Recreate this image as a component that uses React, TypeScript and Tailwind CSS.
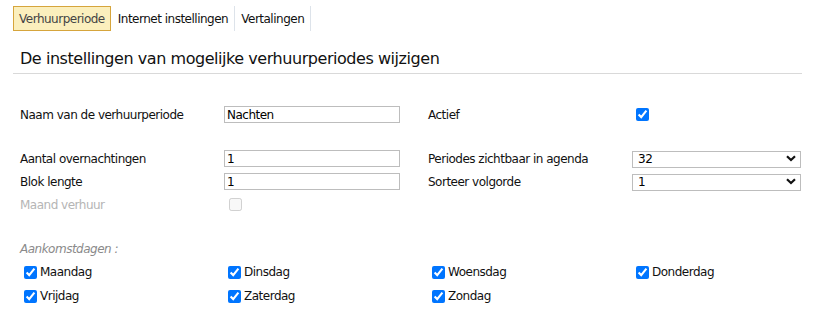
import React from 'react'

const font = { fontFamily: '"DejaVu Sans", Verdana, sans-serif' }

const Chevron = () => (
  <svg
    aria-hidden="true"
    width="10"
    height="7"
    viewBox="0 0 10 7"
    className="absolute right-[5px] top-[5px] pointer-events-none"
  >
    <path d="M1 1.2 L5 5 L9 1.2" fill="none" stroke="#111" strokeWidth="2.2" />
  </svg>
)

const TextField = ({ value }: { value: string }) => (
  <input
    defaultValue={value}
    className="w-[176px] shrink-0 h-[17px] border border-[#bdbdbd] px-[2px] text-[12px] tracking-[-0.5px] text-black outline-none leading-none"
    style={font}
  />
)

const SelectField = ({ value }: { value: string }) => (
  <div className="relative w-[169px] shrink-0 h-[17px]">
    <select
      defaultValue={value}
      className="appearance-none w-full h-full border border-[#bdbdbd] bg-white pl-[5px] text-[12px] tracking-[-0.5px] text-black outline-none leading-none"
      style={font}
    >
      <option>{value}</option>
    </select>
    <Chevron />
  </div>
)

const Check = ({ checked = true, disabled = false }) => (
  <input
    type="checkbox"
    defaultChecked={checked}
    disabled={disabled}
    className="w-[13px] h-[13px] m-0 shrink-0 accent-[#0075ff]"
  />
)

const days = [
  'Maandag',
  'Dinsdag',
  'Woensdag',
  'Donderdag',
  'Vrijdag',
  'Zaterdag',
  'Zondag',
]

export default function App() {
  return (
    <div
      className="w-[815px] h-[323px] bg-white text-[12px] tracking-[-0.5px] text-[#111] overflow-hidden"
      style={font}
    >
      {/* tabs */}
      <div className="flex items-center pt-[6px] pl-[13px] h-[31px]">
        <div className="h-[25px] px-[5px] flex items-center bg-[#fbefbd] border border-[#d6a53c] text-[#444]">
          Verhuurperiode
        </div>
        <div className="h-[25px] flex items-center pl-[7px] pr-[6px] border-r border-[#dde3ea]">
          Internet instellingen
        </div>
        <div className="h-[25px] flex items-center px-[6px] border-r border-[#dde3ea]">
          Vertalingen
        </div>
      </div>

      {/* title */}
      <div className="mx-[13px] mt-[16px] border-b border-[#d9d9d9] pl-[7px] pb-[2px] text-[16px] tracking-[-0.45px] text-[#111]">
        De instellingen van mogelijke verhuurperiodes wijzigen
      </div>

      {/* form */}
      <div className="pl-[20px] pt-[31px]">
        <div className="flex items-center h-[19px]">
          <div className="w-[204px] shrink-0">Naam van de verhuurperiode</div>
          <TextField value="Nachten" />
          <div className="w-[236px] shrink-0 pl-[28px]">Actief</div>
          <Check />
        </div>

        <div className="flex items-center h-[19px] mt-[25px]">
          <div className="w-[204px] shrink-0">Aantal overnachtingen</div>
          <TextField value="1" />
          <div className="w-[232px] shrink-0 pl-[28px]">Periodes zichtbaar in agenda</div>
          <SelectField value="32" />
        </div>
        <div className="flex items-center h-[19px] mt-[4px]">
          <div className="w-[204px] shrink-0">Blok lengte</div>
          <TextField value="1" />
          <div className="w-[232px] shrink-0 pl-[28px]">Sorteer volgorde</div>
          <SelectField value="1" />
        </div>
        <div className="flex items-center h-[19px] mt-[4px]">
          <div className="w-[209px] shrink-0 text-[#b5b5b5]">Maand verhuur</div>
          <Check checked={false} disabled />
        </div>

        <div className="mt-[26px] italic text-[#8a8a8a]">Aankomstdagen :</div>
        <div className="grid grid-cols-[204px_204px_204px_204px] gap-y-[8px] mt-[6px] pl-[4px]">
          {days.map((d) => (
            <label key={d} className="flex items-center h-[16px] gap-[3px]">
              <Check />
              <span>{d}</span>
            </label>
          ))}
        </div>
      </div>
    </div>
  )
}
